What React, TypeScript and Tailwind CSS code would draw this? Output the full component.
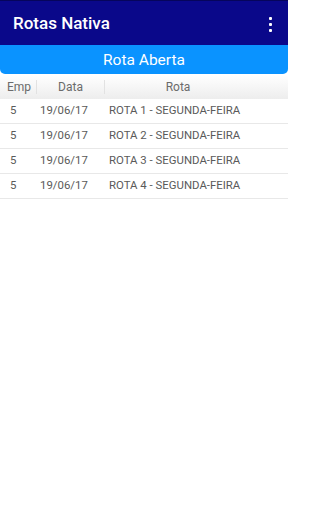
const rotas = [
  { emp: '5', data: '19/06/17', rota: 'ROTA 1 - SEGUNDA-FEIRA' },
  { emp: '5', data: '19/06/17', rota: 'ROTA 2 - SEGUNDA-FEIRA' },
  { emp: '5', data: '19/06/17', rota: 'ROTA 3 - SEGUNDA-FEIRA' },
  { emp: '5', data: '19/06/17', rota: 'ROTA 4 - SEGUNDA-FEIRA' },
]

export default function App() {
  return (
    <div className="flex flex-col w-[288px] h-[512px] bg-white font-['Roboto',sans-serif]">
      <header className="flex items-center justify-between h-[45px] pt-[2px] px-[13px] bg-[#0a088a] border-t border-[#06055c]">
        <h1 className="text-[17px] font-medium text-white">Rotas Nativa</h1>
        <div className="flex flex-col items-center gap-[3px] mr-[3px]">
          <span className="w-[3px] h-[3px] bg-white rounded-[1px]" />
          <span className="w-[3px] h-[3px] bg-white rounded-[1px]" />
          <span className="w-[3px] h-[3px] bg-white rounded-[1px]" />
        </div>
      </header>

      <div className="flex items-center justify-center h-[29px] pt-[2px] bg-[#0a93ff] rounded-b-[5px] text-white text-[15.5px]">
        Rota Aberta
      </div>

      <div className="flex items-center h-[24px] mt-[1px] bg-gradient-to-b from-white to-[#ededed] text-[12px] text-[#6b6b6b]">
        <div className="w-[36px] pl-[7px]">Emp</div>
        <div className="w-px h-[14px] bg-[#e2e2e2]" />
        <div className="w-[67px] text-center">Data</div>
        <div className="w-px h-[14px] bg-[#e2e2e2]" />
        <div className="w-[146px] text-center">Rota</div>
      </div>

      <div className="flex flex-col text-[11.4px] text-[#5a5a5a]">
        {rotas.map((r) => (
          <div key={r.rota} className="flex items-center h-[25px] border-b border-[#e8e8e8]">
            <div className="w-[36px] pl-[10px]">{r.emp}</div>
            <div className="w-[68px] pl-[4px]">{r.data}</div>
            <div className="pl-[5px]">{r.rota}</div>
          </div>
        ))}
      </div>
    </div>
  )
}
